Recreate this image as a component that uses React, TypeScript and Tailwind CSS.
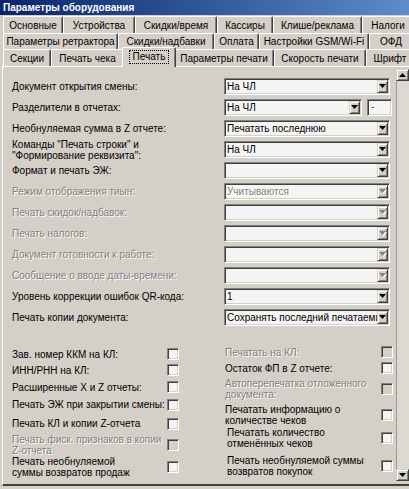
import React from 'react';

type Row = { label: string[]; value?: string; disabled?: boolean; extra?: boolean };
type CheckItem = { label: string[]; disabled?: boolean; h: string; shift?: boolean };

const sunken =
  'border border-t-[#808080] border-l-[#808080] border-b-white border-r-white shadow-[inset_1px_1px_0_#404040,inset_-1px_-1px_0_#d4d0c8]';
const raised =
  'border border-t-[#d4d0c8] border-l-[#d4d0c8] border-b-[#404040] border-r-[#404040] shadow-[inset_1px_1px_0_#ffffff,inset_-1px_-1px_0_#808080]';
const grayText = 'text-[#808080] [text-shadow:1px_1px_0_#ffffff]';

const ROWS: Row[] = [
  { label: ['Документ открытия смены:'], value: 'На ЧЛ' },
  { label: ['Разделители в отчетах:'], value: 'На ЧЛ', extra: true },
  { label: ['Необнуляемая сумма в Z отчете:'], value: 'Печатать последнюю' },
  { label: ['Команды "Печать строки" и', '"Формирование реквизита":'], value: 'На ЧЛ' },
  { label: ['Формат и печать ЭЖ:'], value: '' },
  { label: ['Режим отображения тиын:'], value: 'Учитываются', disabled: true },
  { label: ['Печать скидок/надбавок:'], disabled: true },
  { label: ['Печать налогов:'], disabled: true },
  { label: ['Документ готовности к работе:'], disabled: true },
  { label: ['Сообщение о вводе даты-времени:'], disabled: true },
  { label: ['Уровень коррекции ошибок QR-кода:'], value: '1' },
  { label: ['Печать копии документа:'], value: 'Сохранять последний печатаемый' },
];

const LEFT: CheckItem[] = [
  { label: ['Зав. номер ККМ на КЛ:'], h: 'h-[16px]' },
  { label: ['ИНН/РНН на КЛ:'], h: 'h-[16px]' },
  { label: ['Расширенные X и Z отчеты:'], h: 'h-[18px]' },
  { label: ['Печать ЭЖ при закрытии смены:'], h: 'h-[17px]' },
  { label: ['Печать КЛ и копии Z-отчета'], h: 'h-[21px]' },
  { label: ['Печать фиск. признаков в копии', 'Z-отчета'], disabled: true, h: 'h-[22px]' },
  { label: ['Печать необнуляемой', 'суммы возвратов продаж'], h: 'h-[22px]' },
];

const RIGHT: CheckItem[] = [
  { label: ['Печатать на КЛ:'], disabled: true, h: 'h-[16px]' },
  { label: ['Остаток ФП в Z отчете:'], h: 'h-[16px]' },
  { label: ['Автоперепечатка отложенного', 'документа:'], disabled: true, h: 'h-[26px]' },
  { label: ['Печатать информацию о', 'количестве чеков'], h: 'h-[25px]' },
  { label: ['Печатать количество', 'отменённых чеков'], h: 'h-[21px]', shift: true },
  { label: ['Печать необнуляемой суммы', 'возвратов покупок'], h: 'h-[35px]', shift: true },
];

const TABS: { name: string; w: string; active?: boolean }[][] = [
  [
    { name: 'Основные', w: 'w-[60px]' },
    { name: 'Устройства', w: 'w-[72px]' },
    { name: 'Скидки/время', w: 'w-[82px]' },
    { name: 'Кассиры', w: 'w-[56px]' },
    { name: 'Клише/реклама', w: 'w-[89px]' },
    { name: 'Налоги', w: 'w-[52px]' },
  ],
  [
    { name: 'Параметры ретрактора', w: 'w-[115px]' },
    { name: 'Скидки/надбавки', w: 'w-[96px]' },
    { name: 'Оплата', w: 'w-[45px]' },
    { name: 'Настройки GSM/Wi-Fi', w: 'w-[110px]' },
    { name: 'ОФД', w: 'w-[44px]' },
  ],
  [
    { name: 'Секции', w: 'w-[48px]' },
    { name: 'Печать чека', w: 'w-[73px]' },
    { name: 'Печать', w: 'w-[54px]', active: true },
    { name: 'Параметры печати', w: 'w-[100px]' },
    { name: 'Скорость печати', w: 'w-[92px]' },
    { name: 'Шрифт', w: 'w-[48px]' },
  ],
];

const Arrow = ({ disabled, up }: { disabled?: boolean; up?: boolean }) => (
  <svg width="8" height="5" viewBox="0 0 8 5" className="overflow-visible">
    {disabled && <polygon points={up ? '1,5 8,5 4.5,1' : '1,1 8,1 4.5,5'} fill="#ffffff" />}
    <polygon points={up ? '0,4 7,4 3.5,0' : '0,0 7,0 3.5,4'} fill={disabled ? '#808080' : '#000000'} />
  </svg>
);

const Combo = ({ value, disabled, w }: { value?: string; disabled?: boolean; w: string }) => (
  <div className={`h-[17px] ${w} shrink-0 flex items-center bg-[#f4f4f4] ${sunken}`}>
    <span className={`flex-1 pl-[2px] overflow-hidden whitespace-nowrap leading-[13px] ${disabled ? grayText : 'text-black'}`}>
      {value}
    </span>
    <div className={`w-[11px] h-[13px] mr-px shrink-0 flex items-center justify-center bg-[#d4d0c8] ${raised}`}>
      <Arrow disabled={disabled} />
    </div>
  </div>
);

const Check = ({ disabled }: { disabled?: boolean }) => (
  <div className={`w-[12px] h-[12px] shrink-0 ${sunken} ${disabled ? 'bg-[#d4d0c8]' : 'bg-[#f4f4f4]'}`} />
);

const Label = ({ lines, disabled }: { lines: string[]; disabled?: boolean }) => (
  <div className={`leading-[11px] ${disabled ? grayText : 'text-black'}`}>
    {lines.map((l) => (
      <div key={l} className="whitespace-nowrap">{l}</div>
    ))}
  </div>
);

const CheckColumn = ({ items, labelW }: { items: CheckItem[]; labelW: string }) => (
  <div className="flex flex-col">
    {items.map((it) => (
      <div key={it.label[0]} className={`${it.h} flex items-center`}>
        <div className={`${labelW} overflow-hidden ${it.shift ? 'pl-[2px]' : ''}`}>
          <Label lines={it.label} disabled={it.disabled} />
        </div>
        <Check disabled={it.disabled} />
      </div>
    ))}
  </div>
);

export default function App() {
  return (
    <div className="w-[409px] h-[489px] bg-[#d4d0c8] overflow-hidden text-[10px] font-['Liberation_Sans',Arial,sans-serif]">
      <div className="h-[15px] flex items-center pl-[3px] bg-gradient-to-r from-[#0a246a] to-[#5e8ccb] text-white font-bold whitespace-nowrap">
        Параметры оборудования
      </div>

      <div className="mt-px pl-[3px]">
        {TABS.map((row, i) => (
          <div key={i} className={`flex ${i === 1 ? 'h-[16px]' : 'h-[17px]'}`}>
            {row.map((t) =>
              t.active ? (
                <div
                  key={t.name}
                  className={`${t.w} shrink-0 relative z-10 -mt-[2px] h-[20px] -mx-[2px] bg-[#d4d0c8] border-t border-l border-white border-r border-r-[#404040] shadow-[inset_-1px_0_0_#808080] rounded-t-[2px] flex items-start justify-center pt-[2px]`}
                >
                  <span className="px-[3px] h-[14px] leading-[12px] border border-dotted border-black whitespace-nowrap">
                    {t.name}
                  </span>
                </div>
              ) : (
                <div
                  key={t.name}
                  className={`${t.w} shrink-0 border-t border-l border-white border-r border-r-[#404040] shadow-[inset_-1px_0_0_#808080] rounded-t-[2px] flex items-center justify-center whitespace-nowrap`}
                >
                  {t.name}
                </div>
              )
            )}
          </div>
        ))}
      </div>

      <div className="h-[420px] ml-[2px] flex border-t border-l border-white border-b-2 border-b-[#404040]">
        <div className="w-[393px] shrink-0 overflow-hidden pl-[9px] pt-[9px]">
          {ROWS.map((r) => (
            <div key={r.label[0]} className="h-[21px] flex items-center">
              <div className="w-[212px] shrink-0">
                <Label lines={r.label} disabled={r.disabled} />
              </div>
              {r.extra ? (
                <div className="flex gap-[5px]">
                  <Combo value={r.value} w="w-[138px]" />
                  <div className={`h-[17px] w-[25px] bg-[#f4f4f4] pl-[3px] leading-[14px] text-[#404040] ${sunken}`}>-</div>
                </div>
              ) : (
                <Combo value={r.value} disabled={r.disabled} w="w-[166px]" />
              )}
            </div>
          ))}

          <div className="flex mt-[16px]">
            <div className="mt-[2px]">
              <CheckColumn items={LEFT} labelW="w-[155px]" />
            </div>
            <div className="ml-[46px]">
              <CheckColumn items={RIGHT} labelW="w-[156px]" />
            </div>
          </div>
        </div>

        <div className="w-[13px] h-[412px] mt-[2px] shrink-0 flex flex-col">
          <div className={`h-[12px] shrink-0 flex items-center justify-center bg-[#d4d0c8] ${raised}`}>
            <Arrow up />
          </div>
          <div className="flex-1 bg-[#dcd9d3] border-l border-[#9c9a96]" />
          <div className={`h-[12px] shrink-0 flex items-center justify-center bg-[#d4d0c8] ${raised}`}>
            <Arrow />
          </div>
        </div>
      </div>
    </div>
  );
}
